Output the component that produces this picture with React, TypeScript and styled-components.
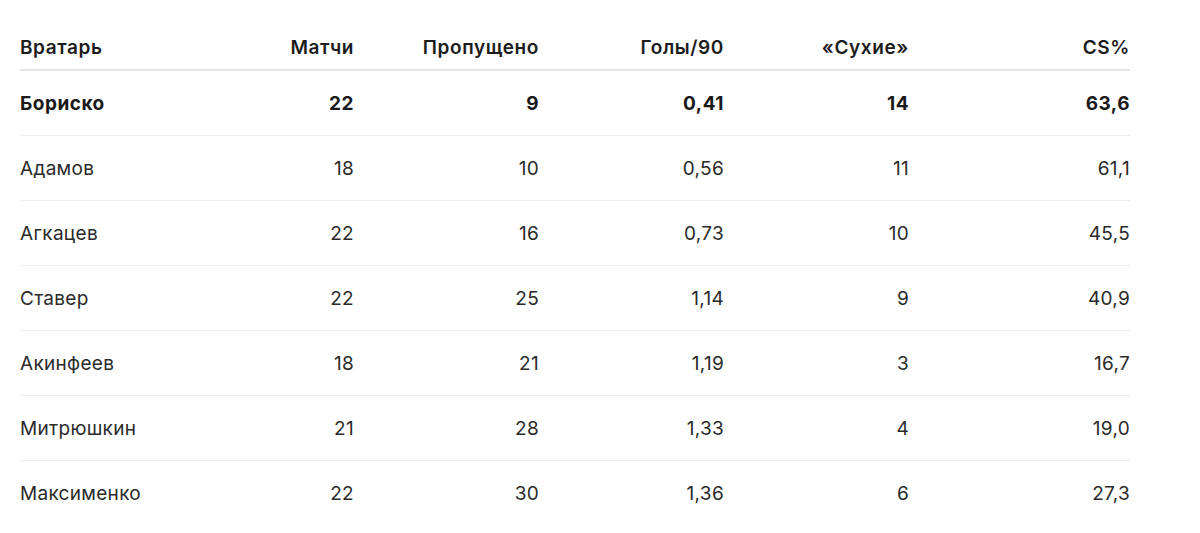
import styled, { createGlobalStyle } from 'styled-components';

const GlobalStyle = createGlobalStyle`
  html, body {
    margin: 0;
    padding: 0;
    background: #fff;
  }
  body {
    font-family: Inter, "Liberation Sans", Arial, sans-serif;
    color: #222;
  }
`;

type Keeper = {
  name: string;
  matches: number;
  conceded: number;
  per90: string;
  cleanSheets: number;
  cs: string;
};

const keepers: Keeper[] = [
  { name: 'Бориско', matches: 22, conceded: 9, per90: '0,41', cleanSheets: 14, cs: '63,6' },
  { name: 'Адамов', matches: 18, conceded: 10, per90: '0,56', cleanSheets: 11, cs: '61,1' },
  { name: 'Агкацев', matches: 22, conceded: 16, per90: '0,73', cleanSheets: 10, cs: '45,5' },
  { name: 'Ставер', matches: 22, conceded: 25, per90: '1,14', cleanSheets: 9, cs: '40,9' },
  { name: 'Акинфеев', matches: 18, conceded: 21, per90: '1,19', cleanSheets: 3, cs: '16,7' },
  { name: 'Митрюшкин', matches: 21, conceded: 28, per90: '1,33', cleanSheets: 4, cs: '19,0' },
  { name: 'Максименко', matches: 22, conceded: 30, per90: '1,36', cleanSheets: 6, cs: '27,3' },
];

const App = () => {
  return (
    <>
      <GlobalStyle />
      <Wrapper>
        <Table>
          <HeadRow>
            <HeadCell>Вратарь</HeadCell>
            <HeadCell $num>Матчи</HeadCell>
            <HeadCell $num>Пропущено</HeadCell>
            <HeadCell $num>Голы/90</HeadCell>
            <HeadCell $num>«Сухие»</HeadCell>
            <HeadCell $num>CS%</HeadCell>
          </HeadRow>
          {keepers.map((k, i) => (
            <Row key={k.name} $bold={i === 0}>
              <Cell>{k.name}</Cell>
              <Cell $num>{k.matches}</Cell>
              <Cell $num>{k.conceded}</Cell>
              <Cell $num>{k.per90}</Cell>
              <Cell $num>{k.cleanSheets}</Cell>
              <Cell $num>{k.cs}</Cell>
            </Row>
          ))}
        </Table>
      </Wrapper>
    </>
  );
};

export default App;

const Wrapper = styled.div`
  padding: 36px 70px 0 20px;
`;

const Table = styled.div`
  width: 1110px;
`;

const columns = '200px 134px 185px 185px 185px 221px';

const HeadRow = styled.div`
  display: grid;
  grid-template-columns: ${columns};
  padding-bottom: 9px;
  border-bottom: 2px solid #e4e4e4;
`;

const HeadCell = styled.div<{ $num?: boolean }>`
  font-size: 19px;
  line-height: 24px;
  font-weight: 600;
  letter-spacing: 0.6px;
  color: #1c1c1c;
  text-align: ${(p) => (p.$num ? 'right' : 'left')};
`;

const Row = styled.div<{ $bold?: boolean }>`
  display: grid;
  grid-template-columns: ${columns};
  padding: 21px 0 19px;
  border-bottom: 1px solid #eeeeee;
  font-weight: ${(p) => (p.$bold ? 700 : 400)};
  letter-spacing: ${(p) => (p.$bold ? '0.5px' : '0.3px')};
  color: ${(p) => (p.$bold ? '#1a1a1a' : '#2a2a2a')};

  &:last-child {
    border-bottom: none;
  }
`;

const Cell = styled.div<{ $num?: boolean }>`
  font-size: 19px;
  line-height: 24px;
  text-align: ${(p) => (p.$num ? 'right' : 'left')};
`;
